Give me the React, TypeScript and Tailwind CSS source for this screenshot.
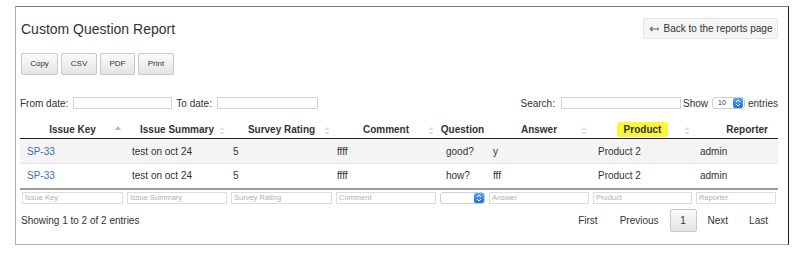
import React from 'react';

const columns = [
  { label: 'Issue Key', width: 'w-[105px]', sort: 'asc', pad: 'pl-[7px]', ph: 'Issue Key' },
  { label: 'Issue Summary', width: 'w-[104px]', sort: 'both', pad: 'pl-[7px]', ph: 'Issue Summary' },
  { label: 'Survey Rating', width: 'w-[105px]', sort: 'both', pad: 'pl-[4px]', ph: 'Survey Rating' },
  { label: 'Comment', width: 'w-[104px]', sort: 'both', pad: 'pl-[3px]', ph: 'Comment' },
  { label: 'Question', width: 'w-[49px]', sort: 'none', pad: 'pl-[8px]', ph: '' },
  { label: 'Answer', width: 'w-[104px]', sort: 'both', pad: 'pl-[6px]', ph: 'Answer' },
  { label: 'Product', width: 'w-[103px]', sort: 'both', pad: 'pl-[7px]', ph: 'Product' },
  { label: 'Reporter', width: 'w-[84px]', sort: 'none', pad: 'pl-[6px]', ph: 'Reporter' },
];

const rows = [
  ['SP-33', 'test on oct 24', '5', 'ffff', 'good?', 'y', 'Product 2', 'admin'],
  ['SP-33', 'test on oct 24', '5', 'ffff', 'how?', 'fff', 'Product 2', 'admin'],
];

function SortIcon({ kind }: { kind: string }) {
  if (kind === 'none') return null;
  return (
    <svg
      width="6"
      height="10"
      viewBox="0 0 6 10"
      className="absolute right-[4px] top-[5px]"
    >
      {kind === 'asc' ? (
        <polygon points="0,4 3,0 6,4" fill="#a9bad6" />
      ) : (
        <>
          <polygon points="0,4 3,1 6,4" fill="#e3e3e3" />
          <polygon points="0,6 3,9 6,6" fill="#e3e3e3" />
        </>
      )}
    </svg>
  );
}

function Stepper() {
  return (
    <div className="w-[10px] h-[10px] rounded-[2px] bg-gradient-to-b from-[#5aa8f5] to-[#1f6fd8] flex items-center justify-center">
      <svg width="6" height="8" viewBox="0 0 6 8">
        <path d="M1 3 L3 1 L5 3 M1 5 L3 7 L5 5" stroke="#fff" strokeWidth="1" fill="none" />
      </svg>
    </div>
  );
}

export default function App() {
  return (
    <div className="bg-white w-[807px] h-[256px] overflow-hidden text-[#333]" style={{ fontFamily: '"Liberation Sans", Arial, sans-serif' }}>
      <div className="ml-[15px] mt-[6px] w-[774px] h-[239px] border border-t-[#7a7a7a] border-l-[#b0b0b0] border-b-[#b0b0b0] border-r-[#1a1a1a] pl-[4px] pr-[10px] pt-[11px]">
        <div className="flex items-center justify-between h-[21px]">
          <h1 className="text-[14px] leading-[16px] ml-[1px] font-normal">Custom Question Report</h1>
          <button className="h-[21px] w-[135px] flex items-center justify-center gap-[5px] text-[10px] font-normal bg-[#f5f5f5] border border-[#e6e6e6] rounded-[2px]">
            <svg width="10" height="8" viewBox="0 0 10 8">
              <path d="M1 4 L3.5 2 M1 4 L3.5 6 M1 4 H9 M9 2.5 V5.5" stroke="#666" strokeWidth="1.2" fill="none" />
            </svg>
            Back to the reports page
          </button>
        </div>

        <div className="flex gap-[3px] mt-[14px] ml-[1px]">
          {['Copy', 'CSV', 'PDF', 'Print'].map((b, i) => (
            <button
              key={b}
              className={`h-[22px] ${['w-[37px]', 'w-[36px]', 'w-[35px]', 'w-[36px]'][i]} text-[8px] font-normal text-[#333] bg-gradient-to-b from-[#fbfbfb] to-[#e4e4e4] border border-[#c8c8c8] rounded-[2px]`}
            >
              {b}
            </button>
          ))}
        </div>

        <div className="flex items-center h-[14px] mt-[21px] text-[10px]">
          <span>From date:</span>
          <div className="ml-[5px] w-[99px] h-[12px] border border-[#d4d4d4] bg-white" />
          <span className="ml-[4px]">To date:</span>
          <div className="ml-[5px] w-[101px] h-[12px] border border-[#d4d4d4] bg-white" />
          <span className="ml-auto">Search:</span>
          <div className="ml-[6px] w-[120px] h-[12px] border border-[#d4d4d4] bg-white" />
          <span className="ml-[2px]">Show</span>
          <div className="ml-[4px] w-[33px] h-[12px] border border-[#cfcfcf] rounded-[3px] bg-white flex items-center justify-between pl-[5px] pr-[1px]">
            <span className="text-[7px] leading-[8px]">10</span>
            <Stepper />
          </div>
          <span className="ml-[3px]">entries</span>
        </div>

        <table className="mt-[11px] table-fixed border-collapse w-[758px] text-[10px]">
          <colgroup>
            {columns.map((c) => (
              <col key={c.label} className={c.width} />
            ))}
          </colgroup>
          <thead>
            <tr>
              {columns.map((c) => (
                <th
                  key={c.label}
                  className={`relative p-0 pt-[3px] pb-[2px] leading-[12px] font-bold border-b border-[#222] ${
                    c.label === 'Reporter' ? 'text-right pr-[10px]' : 'text-center'
                  }`}
                >
                  {c.label === 'Product' ? (
                    <span className="bg-[#f9f73a] px-[7px] py-[2px] rounded-[3px]">{c.label}</span>
                  ) : (
                    c.label
                  )}
                  <SortIcon kind={c.sort} />
                </th>
              ))}
            </tr>
          </thead>
          <tbody>
            {rows.map((r, ri) => (
              <tr
                key={ri}
                className={
                  ri === 0
                    ? 'bg-[#f4f4f4] border-b border-[#e6e6e6]'
                    : 'bg-white border-b-2 border-[#9c9c9c]'
                }
              >
                {r.map((cell, ci) => (
                  <td
                    key={ci}
                    className={`h-[25px] p-0 ${columns[ci].pad} ${ci === 0 ? 'text-[#3b6fb3]' : ''}`}
                  >
                    {cell}
                  </td>
                ))}
              </tr>
            ))}
            <tr>
              {columns.map((c) => (
                <td key={c.label} className="px-[2px] py-[2px]">
                  {c.label === 'Question' ? (
                    <div className="h-[12px] border border-[#d0d0d0] rounded-[3px] bg-white flex items-center justify-end">
                      <Stepper />
                    </div>
                  ) : (
                    <div className="h-[12px] border border-[#dcdcdc] bg-white text-[7.5px] leading-[10px] text-[#b0b0b0] pl-[2px] overflow-hidden whitespace-nowrap">
                      {c.ph}
                    </div>
                  )}
                </td>
              ))}
            </tr>
          </tbody>
        </table>

        <div className="flex items-center justify-between mt-[3px] text-[10px]">
          <span className="ml-[1px]">Showing 1 to 2 of 2 entries</span>
          <div className="flex items-center">
            <span className="px-[11px]">First</span>
            <span className="px-[11px]">Previous</span>
            <span className="h-[23px] w-[27px] flex items-center justify-center border border-[#c8c8c8] rounded-[2px] bg-gradient-to-b from-[#fbfbfb] to-[#e2e2e2]">
              1
            </span>
            <span className="px-[11px]">Next</span>
            <span className="pl-[10px] pr-[10px]">Last</span>
          </div>
        </div>
      </div>
    </div>
  );
}
